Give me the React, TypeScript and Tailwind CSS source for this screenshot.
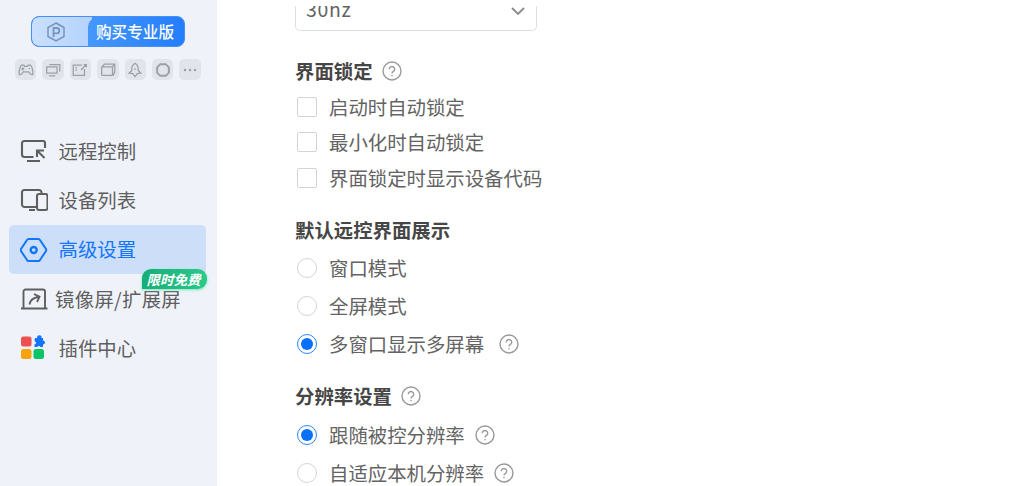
import clsx from 'clsx';
import type { ReactNode } from 'react';

interface NavItem {
  label: string;
  icon: ReactNode;
  active?: boolean;
  badge?: string;
}

interface Option {
  label: string;
  help?: string;
  checked?: boolean;
}

const toolIcons: ReactNode[] = [
  <path key="pad" d="M5.500 4.500h2l1 1.500h3l1-1.500h2c2 0 3.500 7 3 10.500-2 1-3-1-4.500-3h-6C5.500 14 4.500 16 2.500 15 2 11.500 3.500 4.500 5.500 4.500ZM6.500 7v3.500M4.800 8.700h3.400M13 8.500h1.500" />,
  <path key="screen" d="M6 4h11.500v8M3 6.500h11.500v7H3ZM5.500 16.500h7" />,
  <path key="board" d="M12 4.500H2.500v11.500H15V9M5 7.500h1.500M5 10h1.500M11 10l5.500-5.500M14 4h3v3" />,
  <path key="window" d="M6 3.500h11.500v9l-2 3.500H3.500L3 15V7l3-3.500ZM3 6.500h12l2.500-3M15 6.500V16" />,
  <path key="rocket" d="M10 2.500c3 2 4 5 3.500 8l3 3-4 .5-2.500 3.500-2.500-3.500-4-.5 3-3C6 7.500 7 4.500 10 2.500ZM10 8v2" />,
  <path key="ring" strokeWidth="2.200" d="M7 3.500h6l3.500 3.500v6L13 16.500H7L3.500 13V7Z" />,
  <path key="more" strokeWidth="2.700" strokeLinecap="round" d="M4.500 10h.01M10 10h.01M15.500 10h.01" />,
];

const navItems: NavItem[] = [
  {
    label: '远程控制',
    icon: (
      <g fill="none" stroke="currentColor" strokeWidth="2.100">
        <path d="M13.500 20H4.500A2.500 2.500 0 0 1 2 17.500v-11A2.500 2.500 0 0 1 4.500 4H23a2 2 0 0 1 2 2v5" />
        <path d="M7 24h13M24.500 21 17 13.500M17 20v-6.500h7" />
      </g>
    ),
  },
  {
    label: '设备列表',
    icon: (
      <g fill="none" stroke="currentColor" strokeWidth="2.100">
        <path d="M17 21H4.500A2.500 2.500 0 0 1 2 18.500v-12A2.500 2.500 0 0 1 4.500 4H19a2.500 2.500 0 0 1 2.500 2.500V8M9 24h6" />
        <rect x="17" y="8" width="10.500" height="16" rx="2" />
      </g>
    ),
  },
  {
    label: '高级设置',
    active: true,
    icon: (
      <g fill="none" stroke="currentColor" strokeWidth="2">
        <path d="M8.500 4h10q1 0 1.500 1l6 9q.5 1 0 2L20 25q-.5 1-1.500 1h-10q-1 0-1.500-1l-6-9q-.5-1 0-2L7 5q.5-1 1.500-1Z" />
        <circle cx="13.700" cy="15" r="3" strokeWidth="2.400" />
      </g>
    ),
  },
  {
    label: '镜像屏/扩展屏',
    badge: '限时免费',
    icon: (
      <g fill="none" stroke="currentColor" strokeWidth="1.900">
        <path d="M3.500 23V6.500a2 2 0 0 1 2-2H23a2 2 0 0 1 2 2V23M1 23.500h26.500" />
        <path d="M9.500 19.500q1-6.500 9-7.500M14 9l5.500 2.800L17 17" />
      </g>
    ),
  },
  {
    label: '插件中心',
    icon: (
      <g>
        <rect x="1" y="2.500" width="10.500" height="10" rx="2.500" fill="#ec5050" />
        <rect x="1" y="15" width="10.500" height="10" rx="2.500" fill="#f7a40c" />
        <rect x="13.500" y="15" width="10.500" height="10" rx="2.500" fill="#0bc465" />
        <path d="M15 4h2.200a2.200 2.200 0 1 1 4.300 0H23v2.500a2 2 0 1 1 0 4V13h-2.600a1.600 1.600 0 0 0-3 0H14.500v-2.800a1.500 1.500 0 0 0 0-3Z" fill="#1275fb" />
      </g>
    ),
  },
];

function Help() {
  return (
    <svg className="size-5 shrink-0" viewBox="0 0 20 20" fill="none" stroke="#999" strokeWidth="1.400">
      <circle cx="10" cy="10" r="9" />
      <path d="M7.300 8.200a2.700 2.700 0 1 1 4.200 2.200C10.400 11.100 10 11.500 10 12.600M10 14v1.300" />
    </svg>
  );
}

function Heading({ children, help, className }: { children: ReactNode; help?: boolean; className?: string }) {
  return (
    <h2 className={clsx('flex h-6 items-center gap-[9px] text-[19.400px] leading-6 font-bold text-[#464646]', className)}>
      {children}
      {help && <Help />}
    </h2>
  );
}

function OptionRow({ option, type }: { option: Option; type: 'checkbox' | 'radio' }) {
  return (
    <label className={clsx('flex items-center pl-[2px]', type === 'radio' ? 'h-[38.300px]' : 'h-[35.500px]')}>
      <span
        className={clsx(
          'flex size-5 shrink-0 items-center justify-center border bg-white',
          type === 'radio' ? 'rounded-full' : 'rounded-[2px]',
          option.checked ? 'border-[#2f84ff]' : 'border-[#d4d4d4]',
        )}
      >
        {option.checked && <span className="size-3 rounded-full bg-[#0870fb]" />}
      </span>
      <span className="ml-3 text-[19.400px] leading-6 whitespace-nowrap text-[#636363]">{option.label}</span>
      {option.help && (
        <span className={option.help}>
          <Help />
        </span>
      )}
    </label>
  );
}

const lockOptions: Option[] = [{ label: '启动时自动锁定' }, { label: '最小化时自动锁定' }, { label: '界面锁定时显示设备代码' }];

const displayOptions: Option[] = [
  { label: '窗口模式' },
  { label: '全屏模式' },
  { label: '多窗口显示多屏幕', checked: true, help: 'ml-[15px]' },
];

const resolutionOptions: Option[] = [
  { label: '跟随被控分辨率', checked: true, help: 'ml-[10px]' },
  { label: '自适应本机分辨率', help: 'ml-[10px]' },
];

function Sidebar() {
  return (
    <aside className="h-full w-[217px] shrink-0 bg-[#eff3f9] pt-4">
      <button className="ml-[31px] flex h-[31px] w-[154px] overflow-hidden rounded-lg border border-[#468ff5] bg-[#468ff5]">
        <span className="-mr-1 flex h-full w-[60px] items-center justify-center rounded-l-[7px] bg-linear-to-r from-[#c9e0fd] to-[#b4d3fc] pr-3">
          <svg className="h-5 w-[18px]" viewBox="0 0 18 20" fill="none" stroke="#7894bd" strokeWidth="1.500">
            <path d="m9 1 8 4.500v9L9 19l-8-4.500v-9Z" />
            <path d="M6.500 15V6h3.200a2.500 2.500 0 0 1 0 5.300H6.500" strokeWidth="1.800" />
          </svg>
        </span>
        <span className="flex h-full flex-1 items-center justify-center rounded-tl-[10px] bg-linear-to-r from-[#4597fb] to-[#237dfb] pr-0.5 text-[15.600px] font-medium whitespace-nowrap text-white">
          购买专业版
        </span>
      </button>

      <div className="mt-[12px] ml-[15px] flex gap-[6px]">
        {toolIcons.map((icon, i) => (
          <span key={i} className="flex size-[21.400px] items-center justify-center rounded-[5px] bg-[#e1e5eb]">
            <svg className="size-[18px]" viewBox="0 0 20 20" fill="none" stroke="#9a9fa8" strokeWidth="1.400">
              {icon}
            </svg>
          </span>
        ))}
      </div>

      <nav className="mt-[46px] pr-[11px] pl-[9px]">
        {navItems.map((item) => (
          <div
            key={item.label}
            className={clsx(
              'relative flex h-[49.200px] items-center rounded-[5px] pl-[11px]',
              item.active ? 'bg-[#cddff8] text-[#1275fb]' : 'text-[#5f5f5f]',
            )}
          >
            <svg className="size-7 shrink-0" viewBox="0 0 28 28">
              {item.icon}
            </svg>
            <span
              className={clsx(
                'text-[19.400px] leading-6 whitespace-nowrap',
                item.badge ? 'ml-[7px] tracking-[0.300px]' : 'ml-[10.500px]',
              )}
            >
              {item.label}
            </span>
            {item.badge && (
              <span className="absolute -top-[5px] -right-px flex h-5 w-[65px] items-center justify-center rounded-t-[9px] rounded-br-[9px] bg-linear-to-r from-[#16ae78] to-[#2bc98b] pr-0.5 text-[13.500px] font-bold whitespace-nowrap text-white italic shadow-[0_1px_3px_#7ae5b9]">
                {item.badge}
              </span>
            )}
          </div>
        ))}
      </nav>
    </aside>
  );
}

export default function App() {
  return (
    <div className="flex h-[486px] w-[1020px] overflow-hidden bg-white font-['Noto_Sans_CJK_SC',sans-serif]">
      <Sidebar />
      <main className="flex-1 pt-[6px] pl-[78px]">
        <div className="h-[25px] w-[242px] overflow-hidden rounded-b-[5px] border border-t-0 border-[#dedede]">
          <div className="-mt-[9px] flex h-6 items-center justify-between pr-2.5 pl-[10px] text-[19.400px] tracking-[0.700px] text-[#636363]">
            30hz
            <svg className="mt-1 h-[9px] w-[16px]" viewBox="0 0 16 9" fill="none" stroke="#8c8c8c" strokeWidth="1.900">
              <path d="m2 1 6 6 6-6" />
            </svg>
          </div>
        </div>

        <Heading className="mt-[28px]" help>
          界面锁定
        </Heading>
        <div className="mt-[6px]">
          {lockOptions.map((o) => (
            <OptionRow key={o.label} option={o} type="checkbox" />
          ))}
        </div>

        <Heading className="mt-[22px]">默认远控界面展示</Heading>
        <div className="mt-[7px]">
          {displayOptions.map((o) => (
            <OptionRow key={o.label} option={o} type="radio" />
          ))}
        </div>

        <Heading className="mt-[21px]" help>
          分辨率设置
        </Heading>
        <div className="mt-[7px]">
          {resolutionOptions.map((o) => (
            <OptionRow key={o.label} option={o} type="radio" />
          ))}
        </div>
      </main>
    </div>
  );
}
